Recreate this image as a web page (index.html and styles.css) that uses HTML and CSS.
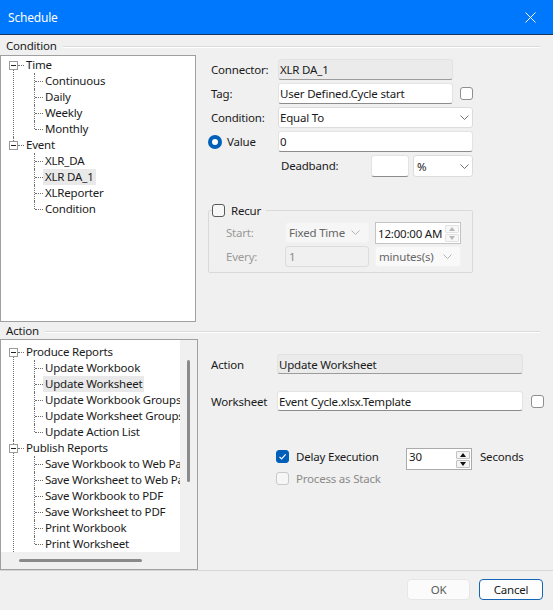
FILE: index.html
```html
<!DOCTYPE html>
<html lang="en">
<head>
<meta charset="utf-8">
<title>Schedule</title>
<link rel="stylesheet" href="styles.css">
</head>
<body>
<div class="dialog">
  <header class="titlebar">
    <span class="title">Schedule</span>
    <span class="close" aria-label="Close">
      <svg width="11" height="11" viewBox="0 0 11 11"><path d="M0.5 0.5L10.5 10.5M10.5 0.5L0.5 10.5" stroke="#fff" stroke-width="1" fill="none"/></svg>
    </span>
  </header>

  <div class="group-head head-cond"><span class="group-title">Condition</span><span class="rule"></span></div>

  <div class="group-body body-cond">
    <div class="tree tree-cond">
      <div class="branch">
        <div class="node root"><span class="exp"></span><span class="stub"></span><span class="txt">Time</span></div>
        <div class="kids">
          <div class="node leaf"><span class="txt">Continuous</span></div>
          <div class="node leaf"><span class="txt">Daily</span></div>
          <div class="node leaf"><span class="txt">Weekly</span></div>
          <div class="node leaf"><span class="txt">Monthly</span></div>
        </div>
      </div>
      <div class="branch last">
        <div class="node root"><span class="exp"></span><span class="stub"></span><span class="txt">Event</span></div>
        <div class="kids">
          <div class="node leaf"><span class="txt">XLR_DA</span></div>
          <div class="node leaf"><span class="txt sel">XLR DA_1</span></div>
          <div class="node leaf"><span class="txt">XLReporter</span></div>
          <div class="node leaf"><span class="txt">Condition</span></div>
        </div>
      </div>
    </div>

    <div class="cond-form">
      <div class="cond-grid">
        <span class="lbl">Connector:</span>
        <div class="field readonly c2">XLR DA_1</div>

        <span class="lbl">Tag:</span>
        <div class="field c2">User Defined.Cycle start</div>
        <span class="check c3 end"></span>

        <span class="lbl">Condition:</span>
        <div class="select c23"><span>Equal To</span>
          <svg class="chev" width="9" height="5" viewBox="0 0 9 5"><polyline points="0.5,0.5 4.5,4.5 8.5,0.5" fill="none" stroke="#707070" stroke-width="1"/></svg>
        </div>

        <span class="lbl radio-lbl"><span class="radio"></span>Value</span>
        <div class="field c23">0</div>

        <div class="deadband c23">
          <span class="db-lbl">Deadband:</span>
          <div class="field db-field"></div>
          <div class="select db-select"><span>%</span>
            <svg class="chev" width="9" height="5" viewBox="0 0 9 5"><polyline points="0.5,0.5 4.5,4.5 8.5,0.5" fill="none" stroke="#707070" stroke-width="1"/></svg>
          </div>
        </div>
      </div>

      <fieldset class="recur">
        <legend class="recur-legend"><span class="legend-row"><span class="check dark"></span><span>Recur</span></span></legend>
        <div class="recur-grid">
          <span class="lbl dim">Start:</span>
          <div class="select disabled"><span>Fixed Time</span>
            <svg class="chev" width="9" height="5" viewBox="0 0 9 5"><polyline points="0.5,0.5 4.5,4.5 8.5,0.5" fill="none" stroke="#b5b5b5" stroke-width="1"/></svg>
          </div>
          <div class="spinner time-spin"><span class="spin-val">12:00:00 AM</span>
            <span class="spin-btns faint"><span class="spin-up"></span><span class="spin-dn"></span></span>
          </div>

          <span class="lbl dim">Every:</span>
          <div class="field disabled">1</div>
          <div class="select disabled soft"><span>minutes(s)</span>
            <svg class="chev" width="9" height="5" viewBox="0 0 9 5"><polyline points="0.5,0.5 4.5,4.5 8.5,0.5" fill="none" stroke="#b5b5b5" stroke-width="1"/></svg>
          </div>
        </div>
      </fieldset>
    </div>
  </div>

  <div class="group-head head-act"><span class="group-title">Action</span><span class="rule"></span></div>

  <div class="group-body body-act">
    <div class="tree tree-act">
      <div class="viewport">
        <div class="branch">
          <div class="node root"><span class="exp"></span><span class="stub"></span><span class="txt">Produce Reports</span></div>
          <div class="kids">
            <div class="node leaf"><span class="txt">Update Workbook</span></div>
            <div class="node leaf"><span class="txt sel">Update Worksheet</span></div>
            <div class="node leaf"><span class="txt">Update Workbook Groups</span></div>
            <div class="node leaf"><span class="txt">Update Worksheet Groups</span></div>
            <div class="node leaf"><span class="txt">Update Action List</span></div>
          </div>
        </div>
        <div class="branch">
          <div class="node root"><span class="exp"></span><span class="stub"></span><span class="txt">Publish Reports</span></div>
          <div class="kids">
            <div class="node leaf"><span class="txt">Save Workbook to Web Page</span></div>
            <div class="node leaf"><span class="txt">Save Worksheet to Web Page</span></div>
            <div class="node leaf"><span class="txt">Save Workbook to PDF</span></div>
            <div class="node leaf"><span class="txt">Save Worksheet to PDF</span></div>
            <div class="node leaf"><span class="txt">Print Workbook</span></div>
            <div class="node leaf"><span class="txt">Print Worksheet</span></div>
          </div>
        </div>
      </div>
      <div class="vtrack"><span class="vthumb"></span></div>
      <div class="htrack"><span class="hthumb"></span></div>
      <div class="corner"></div>
    </div>

    <div class="act-form">
      <div class="act-grid">
        <span class="lbl act-lbl">Action</span>
        <div class="field readonly c2">Update Worksheet</div>

        <span class="lbl act-lbl">Worksheet</span>
        <div class="field c2">Event Cycle.xlsx.Template</div>
        <span class="check c3 end"></span>
      </div>

      <div class="opts">
        <span class="opt"><span class="check on">
          <svg width="11" height="11" viewBox="0 0 11 11"><polyline points="2.5,5.8 4.6,7.9 8.6,3.4" fill="none" stroke="#fff" stroke-width="1.2"/></svg>
        </span>Delay Execution</span>
        <div class="spinner sec-spin"><span class="spin-val">30</span>
          <span class="spin-btns"><span class="spin-up"></span><span class="spin-dn"></span></span>
        </div>
        <span class="unit">Seconds</span>

        <span class="opt off"><span class="check faded"></span>Process as Stack</span>
      </div>
    </div>
  </div>

  <footer class="footer">
    <button class="btn btn-ok" type="button">OK</button>
    <button class="btn btn-cancel" type="button">Cancel</button>
  </footer>
</div>
</body>
</html>
```

FILE: styles.css
```css
* { box-sizing: border-box; }

html, body { margin: 0; padding: 0; }

body {
  width: 553px;
  height: 610px;
  overflow: hidden;
  background: #f0f0f0;
  font-family: "Noto Sans", "Open Sans", "DejaVu Sans", sans-serif;
  font-size: 11.5px;
  letter-spacing: -0.2px;
  color: #1a1a1a;
}

.dialog {
  width: 553px;
  height: 610px;
  display: flex;
  flex-direction: column;
}

/* ---------- title bar ---------- */
.titlebar {
  flex: none;
  height: 35px;
  background: #0078fe;
  border-bottom: 1px solid #17375f;
  display: flex;
  align-items: center;
  justify-content: space-between;
  padding: 0 17px 0 8px;
  color: #fff;
  font-size: 12px;
}
.close { display: flex; }
.close svg { display: block; }

/* ---------- group headings ---------- */
.group-head {
  flex: none;
  display: flex;
  align-items: center;
  padding-left: 6px;
}
.head-cond { height: 20px; }
.head-act { height: 17px; }
.rule {
  flex: 1;
  height: 2px;
  border-top: 1px solid #dadada;
  border-bottom: 1px solid #fff;
  margin: 3px 13px 0 6px;
}

.group-body { flex: none; display: flex; }
.body-cond { height: 267px; }
.body-act { height: 231px; }

/* ---------- tree views ---------- */
.tree {
  flex: none;
  background: #fff;
  border: 1px solid #a0a0a0;
}
.tree-cond {
  width: 196px;
  height: 100%;
  padding-top: 1px;
}

.branch { position: relative; }
.node {
  position: relative;
  height: 16px;
  display: flex;
  align-items: center;
  white-space: nowrap;
}
.root { padding-left: 8px; }
.exp {
  flex: none;
  position: relative;
  width: 9px;
  height: 9px;
  border: 1px solid #9a9a9a;
  background: #fff;
}
.exp::after {
  content: "";
  position: absolute;
  left: 1px;
  top: 3px;
  width: 5px;
  height: 1px;
  background: #222;
}
.stub {
  flex: none;
  width: 6px;
  border-top: 1px dotted #6e6e6e;
}
.txt {
  padding: 0 2px;
  height: 16px;
  line-height: 16px;
}
.txt.sel { background: #e9e9e9; }

/* connector between top-level nodes */
.branch:not(.last)::before {
  content: "";
  position: absolute;
  left: 12px;
  top: 13px;
  bottom: 0;
  border-left: 1px dotted #6e6e6e;
}
.branch + .branch > .root::before {
  content: "";
  position: absolute;
  left: 12px;
  top: 0;
  height: 4px;
  border-left: 1px dotted #6e6e6e;
}

.kids { margin-left: 33px; }
.leaf { padding-left: 9px; }
.leaf::before {
  content: "";
  position: absolute;
  left: 0;
  top: 0;
  bottom: 0;
  border-left: 1px dotted #6e6e6e;
}
.leaf:last-child::before { bottom: 8px; }
.leaf::after {
  content: "";
  position: absolute;
  left: 1px;
  top: 8px;
  width: 8px;
  border-top: 1px dotted #6e6e6e;
}

/* action tree with scrollbars */
.tree-act {
  width: 198px;
  height: 231px;
  display: grid;
  grid-template-columns: 179px 17px;
  grid-template-rows: 212px 17px;
}
.viewport {
  overflow: hidden;
  padding-top: 4px;
  background: #fff;
}
.vtrack {
  background: #f0f0f0;
  padding: 20px 0 0 7px;
}
.vthumb {
  display: block;
  width: 3px;
  height: 122px;
  border-radius: 2px;
  background: #8a8a8a;
}
.htrack {
  background: #f0f0f0;
  padding: 7px 0 0 18px;
}
.hthumb {
  display: block;
  width: 123px;
  height: 3px;
  border-radius: 2px;
  background: #8a8a8a;
}
.corner { background: #f0f0f0; }

/* ---------- form controls ---------- */
.lbl {
  grid-column: 1;
  align-self: center;
  padding-left: 3px;
  white-space: nowrap;
}
.lbl.dim { color: #9a9a9a; padding-left: 0; }
.c2 { grid-column: 2; }
.c3 { grid-column: 3; }
.c23 { grid-column: 2 / 4; }
.end { justify-self: end; align-self: center; }

.field {
  display: flex;
  align-items: center;
  height: 21px;
  padding: 0 4px 0 1px;
  background: #fff;
  border: 1px solid #e3e3e3;
  border-bottom-color: #8c8c8c;
  border-radius: 3px;
  white-space: nowrap;
  overflow: hidden;
}
.field.readonly {
  background: #ebebeb;
  border-color: #e2e2e2;
  border-bottom-color: #9c9c9c;
}
.field.disabled {
  background: #f0f0f0;
  border-color: #dcdcdc;
  color: #8a8a8a;
  padding-left: 3px;
}

.select {
  display: flex;
  align-items: center;
  justify-content: space-between;
  height: 21px;
  padding: 0 3px 0 1px;
  background: #fff;
  border: 1px solid #dcdcdc;
  border-radius: 3px;
  white-space: nowrap;
}
.select.disabled {
  background: #f6f6f6;
  border-color: #f2f2f2;
  color: #666;
  padding-left: 3px;
  padding-right: 8px;
}
.select.soft { background: #f9f9f9; }
.chev { flex: none; display: block; }

.check {
  flex: none;
  display: flex;
  align-items: center;
  justify-content: center;
  width: 13px;
  height: 13px;
  border: 1px solid #8f8f8f;
  border-radius: 3px;
  background: #fff;
}
.check.dark { border-color: #5a5a5a; background: #f7f7f7; }
.check.faded { border-color: #c9c9c9; background: #f6f6f6; }
.check.on { border-color: #005fb8; background: #005fb8; }
.check svg { display: block; }

.radio {
  flex: none;
  position: relative;
  width: 14px;
  height: 14px;
  border-radius: 50%;
  background: #005fb8;
}
.radio::after {
  content: "";
  position: absolute;
  left: 4px;
  top: 4px;
  width: 6px;
  height: 6px;
  border-radius: 50%;
  background: #fff;
}

.spinner {
  display: flex;
  align-items: center;
  background: #fff;
  border: 1px solid #ababab;
}
.spin-val { padding-left: 2px; white-space: nowrap; }
.spin-btns {
  margin-left: auto;
  margin-right: 1px;
  display: flex;
  flex-direction: column;
  gap: 1px;
}
.spin-btns > span {
  position: relative;
  width: 14px;
  height: 8px;
  border: 1px solid #c2c2c2;
  border-radius: 1px;
  background: #f4f4f4;
}
.spin-btns > span::after {
  content: "";
  position: absolute;
  left: 3px;
  top: 1px;
  border-left: 3.5px solid transparent;
  border-right: 3.5px solid transparent;
}
.spin-up::after { border-bottom: 4px solid #111; }
.spin-dn::after { border-top: 4px solid #111; }
.faint > span { border-color: #e1e1e1; background: #f7f7f7; }
.faint .spin-up::after { border-bottom-color: #b8b8b8; }
.faint .spin-dn::after { border-top-color: #b8b8b8; }

/* ---------- condition panel ---------- */
.cond-form { padding: 4px 0 0 12px; }
.cond-grid {
  display: grid;
  grid-template-columns: 70px 175px 20px;
  grid-auto-rows: 21px;
  row-gap: 3px;
}
.radio-lbl {
  display: flex;
  align-items: center;
  gap: 5px;
  padding-left: 0;
}
.deadband {
  display: flex;
  align-items: center;
  height: 22px;
}
.db-lbl { width: 93px; padding-left: 3px; margin-top: -2px; }
.db-field { width: 38px; height: 22px; margin-right: 4px; }
.db-select { width: 60px; height: 22px; padding-left: 3px; }

.recur {
  margin: 27px 0 0 0;
  width: 265px;
  padding: 5px 0 5px 3px;
  border: 1px solid #d9d9d9;
  border-radius: 2px;
  min-inline-size: 0;
}
.recur-legend { padding: 0 5px 0 0; height: 14px; }
.legend-row {
  display: flex;
  align-items: center;
  gap: 6px;
  height: 14px;
}
.recur-grid {
  margin-left: 14px;
  display: grid;
  grid-template-columns: 53px 84px 86px;
  grid-auto-rows: 21px;
  column-gap: 6px;
  row-gap: 3px;
}
.time-spin {
  height: 22px;
  border-color: #c4c4c4;
}

/* ---------- action panel ---------- */
.act-form { padding: 15px 0 0 12px; }
.act-grid {
  display: grid;
  grid-template-columns: 67px 246px 21px;
  grid-auto-rows: 20px;
  row-gap: 17px;
}
.act-grid .field { height: 20px; }
.act-lbl { padding-left: 1px; }

.opts {
  margin: 37px 0 0 66px;
  display: grid;
  grid-template-columns: 122px 66px auto;
  grid-template-rows: 16px 16px;
  column-gap: 8px;
  row-gap: 6px;
  align-items: center;
}
.opt {
  display: flex;
  align-items: center;
  gap: 7px;
  white-space: nowrap;
}
.opt.off { grid-column: 1 / 3; color: #8a8a8a; }
.sec-spin {
  align-self: start;
  height: 22px;
  align-items: flex-start;
}
.sec-spin .spin-val { line-height: 16px; margin-top: 0; }
.sec-spin .spin-btns { align-self: center; }
.unit { white-space: nowrap; }

/* ---------- footer ---------- */
.footer {
  flex: 1;
  border-top: 1px solid #d6d6d6;
  padding: 8px 10px 0 0;
  display: flex;
  justify-content: flex-end;
  align-items: flex-start;
  gap: 9px;
}
.btn {
  height: 21px;
  padding: 0;
  font: inherit;
  letter-spacing: inherit;
  border-radius: 4px;
  cursor: default;
}
.btn-ok {
  width: 63px;
  background: #fbfbfb;
  border: 1px solid #e6e6e6;
  color: #5c5c5c;
}
.btn-cancel {
  width: 64px;
  background: #fdfdfd;
  border: 1px solid #1664b6;
  color: #1a1a1a;
}
```
